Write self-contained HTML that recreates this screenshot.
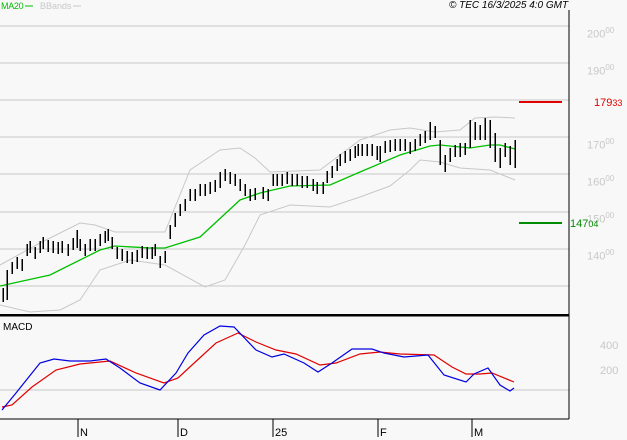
<!DOCTYPE html>
<html><head><meta charset="utf-8"><style>
html,body{margin:0;padding:0;background:#f8f8f8;}
body{width:627px;height:440px;overflow:hidden;position:relative;font-family:"Liberation Sans",sans-serif;}
.t{position:absolute;font-size:11px;line-height:12px;white-space:nowrap;}
.g{color:#c8c8c8;}
</style></head><body>
<svg width="627" height="440" style="position:absolute;left:0;top:0" shape-rendering="crispEdges">
<g stroke="#c8c8c8" stroke-width="1.4">
<line x1="0" y1="26" x2="569" y2="26"/>
<line x1="0" y1="63" x2="569" y2="63"/>
<line x1="0" y1="100" x2="569" y2="100"/>
<line x1="0" y1="137" x2="569" y2="137"/>
<line x1="0" y1="174" x2="569" y2="174"/>
<line x1="0" y1="212" x2="569" y2="212"/>
<line x1="0" y1="249" x2="569" y2="249"/>
<line x1="0" y1="286" x2="569" y2="286"/>
<line x1="0" y1="390" x2="569" y2="390"/>
</g>
<g fill="none" stroke="#c8c8c8" stroke-width="1" shape-rendering="auto">
<polyline points="0,265 40,243 80,223 95,225 115,232 165,232 190,170 220,150 240,148 255,158 270,172 320,170 360,140 390,130 410,128 435,132 460,130 475,118 495,117 515,118"/>
<polyline points="0,305 30,312 60,310 80,300 100,270 130,260 165,265 205,287 225,280 245,245 260,215 290,205 330,207 360,197 390,186 410,170 420,160 440,162 460,168 490,170 515,180"/>
</g>
<polyline fill="none" stroke="#00c000" stroke-width="1.3" shape-rendering="auto" points="0,286 50,275 100,250 115,246 150,248 165,248 200,237 240,200 260,193 290,186 330,185 360,172 400,155 430,146 440,145 470,148 490,145 500,145 515,149"/>
<path stroke="#000" stroke-width="1.5" fill="none" d="M3 288V302M7 270V300M12 262V274M17 257V269M22 259V271M27 244V256M30 241V253M35 247V259M40 241V253M43 237V249M48 240V252M53 241V253M58 242V254M62 241V253M68 244V256M73 238V250M77 230V248M80 239V251M85 244V256M90 239V251M95 239V251M100 234V246M105 231V243M108 229V241M112 237V249M117 247V259M122 249V261M127 251V263M132 252V264M137 250V262M142 246V258M147 247V259M152 247V259M155 244V256M160 256V268M165 251V263M170 225V239M175 213V227M180 204V216M185 199V211M190 189V201M195 189V201M200 184V196M205 184V196M210 182V194M215 180V192M220 172V188M225 169V181M230 172V184M235 174V186M240 179V191M245 184V196M250 189V201M255 188V200M263 187V199M268 189V201M273 174V186M277 174V186M282 174V186M287 172V184M292 174V186M297 174V186M302 176V188M307 176V188M313 179V191M317 182V194M323 182V194M327 171V183M332 166V178M337 159V171M340 154V166M345 151V163M350 149V161M355 146V158M358 144V156M362 144V156M367 144V156M372 144V156M377 146V160M380 146V162M385 141V153M390 140V152M395 139V151M400 139V151M405 139V151M410 142V154M415 139V151M420 134V146M425 131V143M430 122V140M435 126V138M440 140V165M445 155V172M450 148V162M455 145V157M460 143V157M465 143V155M470 120V148M475 122V140M480 125V140M485 118V140M490 120V148M495 133V162M500 148V168M505 143V157M510 146V165M515 140V168"/>
<line x1="519" y1="102" x2="562" y2="102" stroke="#e00000" stroke-width="2"/>
<line x1="519" y1="223" x2="562" y2="223" stroke="#008c00" stroke-width="2"/>
<line x1="569" y1="10" x2="569" y2="419" stroke="#000" stroke-width="1"/>
<line x1="0" y1="315" x2="569" y2="315" stroke="#000" stroke-width="2.5"/>
<line x1="0" y1="419" x2="569" y2="419" stroke="#000" stroke-width="1"/>
<g stroke="#000" stroke-width="1"><line x1="78" y1="419" x2="78" y2="437"/><line x1="178" y1="419" x2="178" y2="437"/><line x1="273" y1="419" x2="273" y2="437"/><line x1="378" y1="419" x2="378" y2="437"/><line x1="472" y1="419" x2="472" y2="437"/></g>
<g fill="none" stroke-width="1.2" shape-rendering="auto">
<polyline stroke="#e00000" points="2,407 12,405 32,387 56,370 80,364 110,361 136,373 164,383 178,378 192,365 216,343 238,333 256,342 276,350 296,354 320,365 336,363 360,354 380,352 400,354 434,355 452,367 466,374 480,374 492,373 514,382"/>
<polyline stroke="#0000e0" points="2,410 16,393 28,378 40,363 54,359 70,361 90,361 106,359 120,368 140,383 160,390 176,373 188,353 204,335 220,326 234,327 256,350 272,357 284,354 304,363 318,372 332,363 352,349 372,349 384,353 404,357 428,355 444,375 466,382 474,374 488,368 500,385 510,391 514,388"/>
</g>
<line x1="25" y1="6" x2="33" y2="6" stroke="#00c000" stroke-width="1"/>
<line x1="73" y1="6" x2="81" y2="6" stroke="#c8c8c8" stroke-width="1"/>
</svg>
<div class="t" style="left:1px;top:0px;color:#00c000;font-size:9px;letter-spacing:-0.3px">MA20</div>
<div class="t g" style="left:40px;top:0px;font-size:9px">BBands</div>
<div class="t" style="left:449px;top:0px;font-size:10px;font-style:italic;color:#000">© TEC 16/3/2025 4:0 GMT</div>
<div class="t g" style="left:587px;top:25px">200<sup style="font-size:8px">00</sup></div>
<div class="t g" style="left:587px;top:62px">190<sup style="font-size:8px">00</sup></div>
<div class="t g" style="left:587px;top:136px">170<sup style="font-size:8px">00</sup></div>
<div class="t g" style="left:587px;top:173px">160<sup style="font-size:8px">00</sup></div>
<div class="t g" style="left:587px;top:210px">150<sup style="font-size:8px">00</sup></div>
<div class="t g" style="left:587px;top:247px">140<sup style="font-size:8px">00</sup></div>
<div class="t" style="left:594px;top:97px;color:#e00000">179<span style="font-size:9px">33</span></div>
<div class="t" style="left:570px;top:218px;color:#008c00">147<span style="font-size:9px">04</span></div>
<div class="t g" style="left:600px;top:340px">400</div>
<div class="t g" style="left:600px;top:365px">200</div>
<div class="t" style="left:3px;top:322px;font-size:10px">MACD</div>
<div class="t" style="left:80px;top:427px">N</div>
<div class="t" style="left:180px;top:427px">D</div>
<div class="t" style="left:275px;top:427px">25</div>
<div class="t" style="left:380px;top:427px">F</div>
<div class="t" style="left:474px;top:427px">M</div>
</body></html>
